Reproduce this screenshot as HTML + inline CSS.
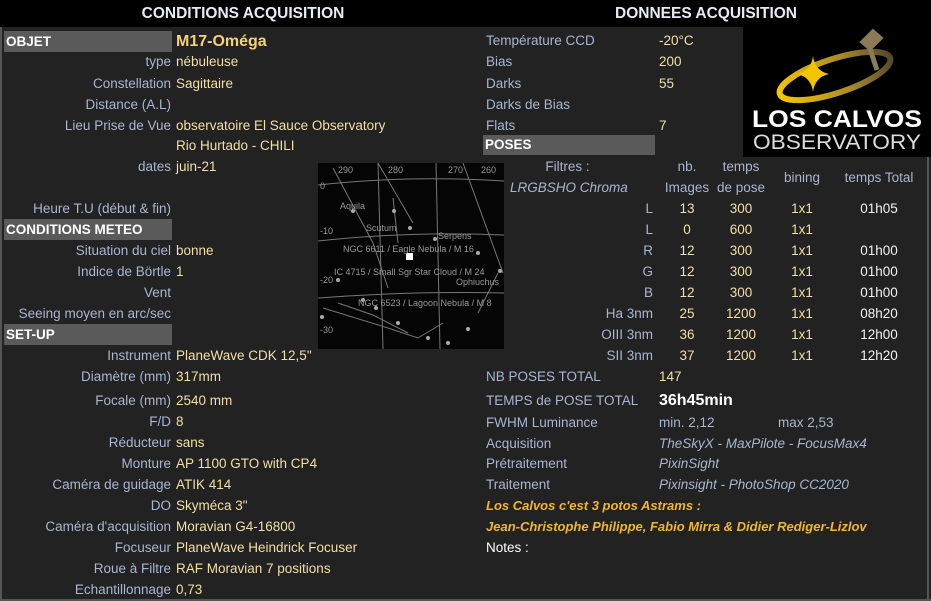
<!DOCTYPE html>
<html><head><meta charset="utf-8"><style>
body{margin:0;width:931px;height:601px;overflow:hidden;background:#222;font-family:"Liberation Sans",sans-serif;font-size:13.5px;position:relative}
div{position:absolute;white-space:nowrap;line-height:18px}
.l{color:#a8b6d2;text-align:right;right:760px}
.v{color:#f4dfa6;left:176px}
.rl{color:#a8b6d2;left:486px}
.rv{color:#f4dfa6;left:659px}
.sec{background:#5a5a5a;color:#fff;font-weight:bold;left:4px;width:168px;height:21px;line-height:21px;padding-left:2px;box-sizing:border-box}
.c{text-align:center;width:60px}
.f{color:#a8b6d2;text-align:right;right:278px}
.cr{color:#f4dfa6}
.w{color:#f2f2f2}
.it{font-style:italic;color:#a8b6d2}
.gold{color:#f1b62c;font-style:italic;font-weight:bold;left:486px}
</style></head><body>
<div style="left:0;top:0;width:931px;height:27px;background:#000"></div>
<div style="left:0;top:0;width:486px;height:27px;line-height:27px;text-align:center;color:#e6ecf6;font-weight:bold;font-size:15.5px">CONDITIONS ACQUISITION</div>
<div style="left:486px;top:0;width:440px;height:27px;line-height:27px;text-align:center;color:#e6ecf6;font-weight:bold;font-size:15.5px">DONNEES ACQUISITION</div>
<div style="left:0;top:27px;width:2px;height:574px;background:#555"></div>
<div style="left:927px;top:157px;width:2px;height:444px;background:#555"></div>
<div style="left:0;top:599px;width:931px;height:2px;background:#555"></div>

<div class="sec" style="top:31px">OBJET</div>
<div style="left:176px;top:31px;color:#f4d27a;font-weight:bold;font-size:16px;line-height:21px">M17-Oméga</div>
<div class="l" style="top:53px">type</div><div class="v" style="top:53px">nébuleuse</div>
<div class="l" style="top:75px">Constellation</div><div class="v" style="top:75px">Sagittaire</div>
<div class="l" style="top:96px">Distance (A.L)</div>
<div class="l" style="top:117px">Lieu Prise de Vue</div><div class="v" style="top:117px">observatoire El Sauce Observatory</div>
<div class="v" style="top:137px">Rio Hurtado - CHILI</div>
<div class="l" style="top:158px">dates</div><div class="v" style="top:158px">juin-21</div>
<div class="l" style="top:200px">Heure T.U (début &amp; fin)</div>
<div class="sec" style="top:219px">CONDITIONS METEO</div>
<div class="l" style="top:242px">Situation du ciel</div><div class="v" style="top:242px">bonne</div>
<div class="l" style="top:263px">Indice de Börtle</div><div class="v" style="top:263px">1</div>
<div class="l" style="top:284px">Vent</div>
<div class="l" style="top:305px">Seeing moyen en arc/sec</div>
<div class="sec" style="top:324px">SET-UP</div>
<div class="l" style="top:347px">Instrument</div><div class="v" style="top:347px">PlaneWave CDK 12,5"</div>
<div class="l" style="top:368px">Diamètre (mm)</div><div class="v" style="top:368px">317mm</div>
<div class="l" style="top:392px">Focale (mm)</div><div class="v" style="top:392px">2540 mm</div>
<div class="l" style="top:413px">F/D</div><div class="v" style="top:413px">8</div>
<div class="l" style="top:434px">Réducteur</div><div class="v" style="top:434px">sans</div>
<div class="l" style="top:455px">Monture</div><div class="v" style="top:455px">AP 1100 GTO with CP4</div>
<div class="l" style="top:476px">Caméra de guidage</div><div class="v" style="top:476px">ATIK 414</div>
<div class="l" style="top:497px">DO</div><div class="v" style="top:497px">Skyméca 3"</div>
<div class="l" style="top:518px">Caméra d'acquisition</div><div class="v" style="top:518px">Moravian G4-16800</div>
<div class="l" style="top:539px">Focuseur</div><div class="v" style="top:539px">PlaneWave Heindrick Focuser</div>
<div class="l" style="top:560px">Roue à Filtre</div><div class="v" style="top:560px">RAF Moravian 7 positions</div>
<div class="l" style="top:581px">Echantillonnage</div><div class="v" style="top:581px">0,73</div>

<svg style="position:absolute;left:318px;top:163px" width="186" height="186" viewBox="0 0 186 186">
<rect width="186" height="186" fill="#050505"/>
<g stroke="#777" stroke-width="1" fill="none">
<path d="M0 22 Q90 12 186 18"/><path d="M0 78 Q90 68 186 72"/><path d="M0 135 Q90 128 186 130"/>
<path d="M60 0 L65 186"/><path d="M118 0 L122 186"/>
<path d="M15 5 L55 80 L70 125"/><path d="M60 0 L95 60"/><path d="M145 0 L185 110"/>
<path d="M5 145 L70 165 L100 175 L125 160"/><path d="M20 140 L55 152 L90 170"/>
<path d="M180 110 L160 150"/><path d="M75 35 L80 80"/>
</g>
<g fill="#aaa"><circle cx="35" cy="48" r="2"/><circle cx="76" cy="48" r="2"/><circle cx="92" cy="65" r="2"/><circle cx="117" cy="76" r="2"/><circle cx="160" cy="90" r="2"/><circle cx="182" cy="108" r="2"/><circle cx="45" cy="137" r="2"/><circle cx="58" cy="145" r="2"/><circle cx="20" cy="117" r="2"/><circle cx="4" cy="154" r="2"/><circle cx="80" cy="160" r="2"/><circle cx="110" cy="175" r="2"/><circle cx="130" cy="180" r="2"/><circle cx="150" cy="166" r="2"/></g>
<rect x="88" y="90" width="7" height="7" fill="#fff"/>
<g fill="#999" font-family="Liberation Sans,sans-serif" font-size="9">
<text x="22" y="46">Aquila</text><text x="48" y="68">Scutum</text><text x="120" y="76">Serpens</text>
<text x="25" y="89">NGC 6611 / Eagle Nebula / M 16</text><text x="16" y="112">IC 4715 / Small Sgr Star Cloud / M 24</text>
<text x="138" y="122">Ophiuchus</text><text x="40" y="143">NGC 6523 / Lagoon Nebula / M 8</text>
<text x="2" y="26">0</text><text x="2" y="71">-10</text><text x="2" y="120">-20</text><text x="2" y="170">-30</text>
<text x="20" y="10">290</text><text x="70" y="10">280</text><text x="130" y="10">270</text><text x="163" y="10">260</text>
</g></svg>

<div class="rl" style="top:32px">Température CCD</div><div class="rv" style="top:32px">-20°C</div>
<div class="rl" style="top:53px">Bias</div><div class="rv" style="top:53px">200</div>
<div class="rl" style="top:75px">Darks</div><div class="rv" style="top:75px">55</div>
<div class="rl" style="top:96px">Darks de Bias</div>
<div class="rl" style="top:117px">Flats</div><div class="rv" style="top:117px">7</div>
<div class="sec" style="left:483px;top:135px;width:172px;height:20px;line-height:20px">POSES</div>

<div style="left:743px;top:26px;width:188px;height:131px;background:#000"></div>
<svg style="position:absolute;left:743px;top:26px" width="188" height="131" viewBox="0 0 188 131">
<defs><linearGradient id="g" x1="0" x2="1"><stop offset="0" stop-color="#f5c400"/><stop offset="0.6" stop-color="#a88a2a"/><stop offset="1" stop-color="#5a4a2a"/></linearGradient></defs>
<ellipse cx="92" cy="50" rx="58" ry="17" transform="rotate(-18 92 50)" fill="none" stroke="url(#g)" stroke-width="6"/>
<path d="M70 30 Q72 45 86 48 Q72 51 70 66 Q68 51 54 48 Q68 45 70 30Z" fill="#f5c400"/>
<path d="M120 16 L130 6 L137 12 L127 22Z M126 20 L134 44" stroke="#8a7a55" stroke-width="5" fill="#8a7a55"/>
<text x="94" y="101" text-anchor="middle" fill="#fff" font-family="Liberation Sans,sans-serif" font-weight="bold" font-size="24" textLength="170" lengthAdjust="spacingAndGlyphs">LOS CALVOS</text>
<text x="94" y="123" text-anchor="middle" fill="#ddd" font-family="Liberation Sans,sans-serif" font-size="21" textLength="168" lengthAdjust="spacingAndGlyphs">OBSERVATORY</text>
</svg>

<div style="left:520px;top:158px;width:95px;text-align:center;color:#a8b6d2">Filtres :</div>
<div class="it" style="left:510px;top:179px">LRGBSHO Chroma</div>
<div class="c" style="left:657px;top:158px;color:#a8b6d2">nb.</div>
<div class="c" style="left:657px;top:179px;color:#a8b6d2">Images</div>
<div class="c" style="left:711px;top:158px;color:#a8b6d2">temps</div>
<div class="c" style="left:711px;top:179px;color:#a8b6d2">de pose</div>
<div class="c" style="left:772px;top:169px;color:#a8b6d2">bining</div>
<div style="left:838px;top:169px;width:82px;text-align:center;color:#a8b6d2">temps Total</div>

<div class="f" style="top:200px">L</div><div class="c cr" style="left:657px;top:200px">13</div><div class="c cr" style="left:711px;top:200px">300</div><div class="c cr" style="left:772px;top:200px">1x1</div><div class="c w" style="left:849px;top:200px">01h05</div>
<div class="f" style="top:221px">L</div><div class="c cr" style="left:657px;top:221px">0</div><div class="c cr" style="left:711px;top:221px">600</div><div class="c cr" style="left:772px;top:221px">1x1</div>
<div class="f" style="top:242px">R</div><div class="c cr" style="left:657px;top:242px">12</div><div class="c cr" style="left:711px;top:242px">300</div><div class="c cr" style="left:772px;top:242px">1x1</div><div class="c w" style="left:849px;top:242px">01h00</div>
<div class="f" style="top:263px">G</div><div class="c cr" style="left:657px;top:263px">12</div><div class="c cr" style="left:711px;top:263px">300</div><div class="c cr" style="left:772px;top:263px">1x1</div><div class="c w" style="left:849px;top:263px">01h00</div>
<div class="f" style="top:284px">B</div><div class="c cr" style="left:657px;top:284px">12</div><div class="c cr" style="left:711px;top:284px">300</div><div class="c cr" style="left:772px;top:284px">1x1</div><div class="c w" style="left:849px;top:284px">01h00</div>
<div class="f" style="top:305px">Ha 3nm</div><div class="c cr" style="left:657px;top:305px">25</div><div class="c cr" style="left:711px;top:305px">1200</div><div class="c cr" style="left:772px;top:305px">1x1</div><div class="c w" style="left:849px;top:305px">08h20</div>
<div class="f" style="top:326px">OIII 3nm</div><div class="c cr" style="left:657px;top:326px">36</div><div class="c cr" style="left:711px;top:326px">1200</div><div class="c cr" style="left:772px;top:326px">1x1</div><div class="c w" style="left:849px;top:326px">12h00</div>
<div class="f" style="top:347px">SII 3nm</div><div class="c cr" style="left:657px;top:347px">37</div><div class="c cr" style="left:711px;top:347px">1200</div><div class="c cr" style="left:772px;top:347px">1x1</div><div class="c w" style="left:849px;top:347px">12h20</div>

<div class="rl" style="top:368px">NB POSES TOTAL</div><div class="rv" style="top:368px">147</div>
<div class="rl" style="top:392px">TEMPS de POSE TOTAL</div><div style="left:659px;top:390px;color:#fff;font-weight:bold;font-size:16px;line-height:21px">36h45min</div>
<div class="rl" style="top:414px">FWHM Luminance</div><div class="rv" style="top:414px;color:#a8b6d2">min. 2,12</div><div style="left:778px;top:414px;color:#a8b6d2">max 2,53</div>
<div class="rl" style="top:435px">Acquisition</div><div class="it" style="left:659px;top:435px">TheSkyX - MaxPilote - FocusMax4</div>
<div class="rl" style="top:455px">Prétraitement</div><div class="it" style="left:659px;top:455px">PixinSight</div>
<div class="rl" style="top:476px">Traitement</div><div class="it" style="left:659px;top:476px">Pixinsight - PhotoShop CC2020</div>
<div class="gold" style="top:497px;font-size:13px">Los Calvos c'est 3 potos Astrams :</div>
<div class="gold" style="top:518px;font-size:13px">Jean-Christophe Philippe, Fabio Mirra &amp; Didier Rediger-Lizlov</div>
<div style="left:486px;top:539px;color:#fff">Notes :</div>
</body></html>
